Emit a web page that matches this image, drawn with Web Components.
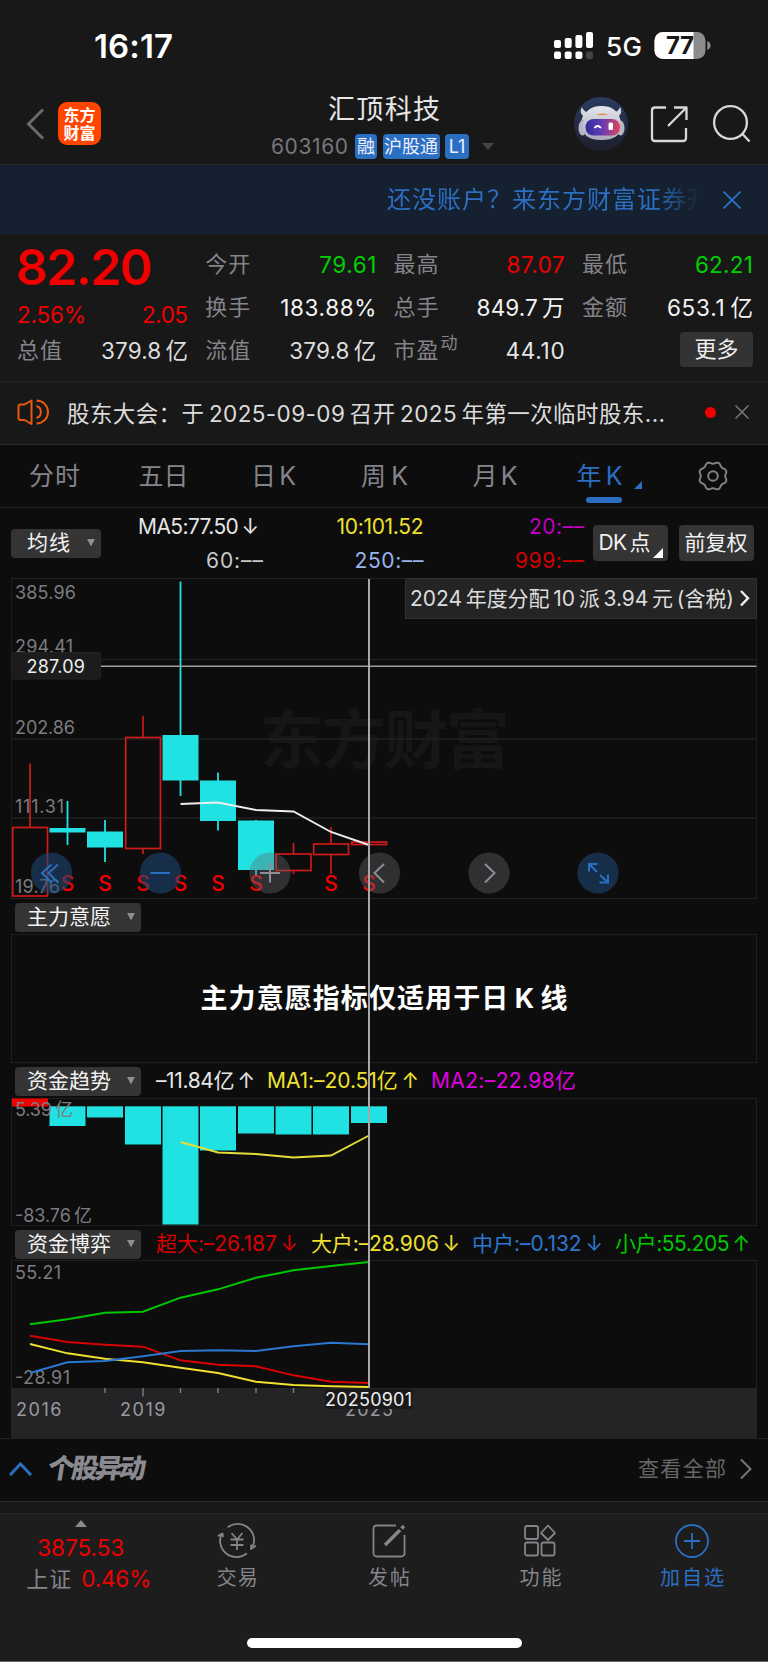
<!DOCTYPE html>
<html lang="zh-CN">
<head>
<meta charset="utf-8">
<title>汇顶科技 603160</title>
<style>
html, body { margin: 0; background: #0d0d0d; }
body {
  width: 768px;
  height: 1662px;
  overflow: hidden;
  font-family: Inter, "Noto Sans CJK SC", sans-serif;
  color: #e6e6e6;
  -webkit-font-smoothing: antialiased;
}
</style>
</head>
<body>
<stock-app></stock-app>
<script>
//shared base: every component only gives css and html
class BaseElement extends HTMLElement {
  connectedCallback() {
    if (this.shadowRoot) return;
    const root = this.attachShadow({ mode: "open" });
    root.innerHTML = `<style>:host{display:block;box-sizing:border-box} *{box-sizing:border-box} svg{display:block}${this.css()}</style>${this.html()}`;
    this.logic();
  }
  css() { return ""; }
  html() { return "<slot></slot>"; }
  logic() {}
}

//text spread over a given width: <fit-text w="45">
class FitText extends BaseElement {
  css() { return `:host{display:inline-block;white-space:nowrap;flex:none} span{display:inline-block}`; }
  html() { return `<span><slot></slot></span>`; }
  logic() {
    const w = Number(this.getAttribute("w"));
    const span = this.shadowRoot.querySelector("span");
    const n = [...this.textContent].length;
    if (!w || n < 2) return;
    const gap = (w - span.getBoundingClientRect().width) / (n - 1);
    span.style.letterSpacing = `${gap}px`;
    span.style.marginRight = `${-gap}px`;
  }
}

//16:17, signal, battery
class StatusBar extends BaseElement {
  css() {
    return `
    :host{height:92px;background:#181818;color:#fff;display:flex;align-items:center;padding-left:94px}
    .time{font-size:33px;font-weight:600;line-height:40px}
    .signal{margin-left:380px}
    .net{font-size:26px;font-weight:500;margin-left:13px;line-height:30px;padding-top:1px}
    .battery{margin-left:12px}`;
  }
  html() {
    return `
    <fit-text class="time" w="79">16:17</fit-text>
    <svg class="signal" width="40" height="28" viewBox="552 32 40 28" fill="#fff">
      <rect x="553" y="40" width="7" height="8" rx="2"/><rect x="563.7" y="38" width="7" height="10" rx="2"/>
      <rect x="574.4" y="35" width="7" height="13" rx="2"/><rect x="585" y="32" width="7" height="16" rx="2"/>
      <rect x="553" y="51.5" width="7" height="7.5" rx="2"/><rect x="563.7" y="51.5" width="7" height="7.5" rx="2"/>
      <rect x="574.4" y="51.5" width="7" height="7.5" rx="2"/><rect x="585" y="51.5" width="7" height="7.5" rx="2" fill="#444"/>
    </svg>
    <fit-text class="net" w="36">5G</fit-text>
    <svg class="battery" width="58" height="28" viewBox="653 32 58 28">
      <clipPath id="b"><rect x="653.5" y="32" width="51" height="27" rx="8.5"/></clipPath>
      <g clip-path="url(#b)"><rect x="653" y="32" width="52" height="28" fill="#8c8c8c"/><rect x="653" y="32" width="39.5" height="28" fill="#fff"/></g>
      <path d="M706.3 41q3.2 1.2 3.2 4.5t-3.2 4.5z" fill="#8c8c8c"/>
      <text x="665" y="54" font-size="24" font-weight="700" fill="#181818" textLength="28">77</text>
    </svg>`;
  }
}

//back, logo, stock name, actions
class StockHeader extends BaseElement {
  css() {
    return `
    :host{height:73px;background:#181818;border-bottom:1px solid #2b2b2b;display:grid;grid-template-columns:271px 1fr 207px}
    .left{display:flex;padding:10px 0 0 26px;gap:12px}
    .logo{width:43px;height:43px;border-radius:9px;background:#ff4500;color:#fff;font-size:16px;line-height:18px;font-weight:700;text-align:center;padding-top:4px}
    .name{font-size:27px;line-height:36px;margin-left:57px}
    .sub{display:flex;align-items:center;height:25px;margin-top:6px;color:#77777c;font-size:21px}
    .sub b{font-weight:400;background:#2b6fc2;color:#eef;border-radius:4px;height:25px;line-height:25px;font-size:18px;text-align:center;margin-right:5.5px}
    .right{display:flex;padding-top:3px}`;
  }
  html() {
    return `
    <div class="left">
      <svg width="20" height="44" viewBox="26 102 20 44" fill="none" stroke="#6a6a6a" stroke-width="3"><path d="M43 109.5L28.500 124L43 138.500"/></svg>
      <div class="logo">东方<br>财富</div>
    </div>
    <div>
      <fit-text class="name" w="112">汇顶科技</fit-text>
      <div class="sub"><fit-text w="77" style="margin-right:7px">603160</fit-text>
        <b style="width:22px">融</b><b style="width:57px">沪股通</b><b style="width:24px">L1</b>
        <svg width="12" height="8" style="margin-left:7px"><path d="M0 0h12l-6 7z" fill="#444"/></svg>
      </div>
    </div>
    <div class="right">
      <svg width="207" height="60" viewBox="561 95 207 60" fill="none" stroke="#d8d8d8" stroke-width="2.3" stroke-linejoin="round">
        <defs>
          <linearGradient id="bg" x2="0" y2="1"><stop stop-color="#2b3a60"/><stop offset="1" stop-color="#1c202a"/></linearGradient>
          <linearGradient id="visor"><stop stop-color="#2d2c9c"/><stop offset=".5" stop-color="#6b3bb4"/><stop offset="1" stop-color="#e04458"/></linearGradient>
          <linearGradient id="head" x2="0" y2="1"><stop stop-color="#e6e6ee"/><stop offset="1" stop-color="#a9a9b8"/></linearGradient>
        </defs>
        <circle cx="601" cy="124" r="27" fill="url(#bg)" stroke="none"/>
        <g stroke="none">
          <path d="M582 107q-3 5 1 9l-3 8 10-12q-6 1-8-5zM620 107q3 5-1 9l3 8-10-12q6 1 8-5z" fill="#d5d5de"/>
          <ellipse cx="582.500" cy="128" rx="4" ry="7.500" fill="#b7b7c4"/><ellipse cx="620.500" cy="128" rx="4" ry="7.500" fill="#b7b7c4"/>
          <path d="M583 123q1-17 18.500-17t18.500 17q3 17-18.500 17t-18.500-17z" fill="url(#head)"/>
          <rect x="585.500" y="119" width="34.500" height="16.500" rx="8" fill="url(#visor)"/>
          <path d="M596 115q6-3 13 0z" fill="#e08a3c"/>
          <rect x="608.500" y="122.500" width="4.500" height="7.500" rx="1.500" fill="#fff"/>
        </g>
        <path d="M594.500 128q3-4 6.500 0" stroke="#fff" stroke-width="1.800"/>
        <path d="M666 107.500H655q-3 0-3 3V138q0 3 3 3H683q3 0 3-3V128M674 107.500H686.500V120M686 108L668 126"/>
        <circle cx="730.500" cy="122.500" r="16.400"/><path d="M742.500 134L749.500 141.500"/>
      </svg>
    </div>`;
  }
}

//open account strip
class AccountBanner extends BaseElement {
  css() {
    return `
    :host{height:70px;background:#152130;color:#2b6fc2;display:flex;align-items:center;padding-left:387px;border-bottom:1px solid #1b1b1f}
    div{width:316px;overflow:hidden;font-size:24px;line-height:34px;-webkit-mask:linear-gradient(90deg,#000 268px,transparent 314px)}
    svg{margin-left:19px}`;
  }
  html() {
    return `<div><fit-text w="324">还没账户？来东方财富证券开</fit-text></div>
    <svg width="20" height="18" stroke="#2b6fc2" stroke-width="1.8"><path d="M1.500 .5L18.500 17.500M18.500 .5L1.500 17.500"/></svg>`;
  }
}

const RED = "#f00000", GREEN = "#00d000";
//label, label width, value, value width, colour
const quotes = [
  [["今开", 45, "79.61", 57, GREEN], ["最高", 45, "87.07", 58, RED], ["最低", 45, "62.21", 58, GREEN]],
  [["换手", 45, "183.88%", 96, "#f4f4f4"], ["总手", 45, "849.7&thinsp;万", 88, "#f4f4f4"], ["金额", 45, "653.1&thinsp;亿", 86, "#f4f4f4"]],
];

//price table
class QuoteBoard extends BaseElement {
  css() {
    return `
    :host{height:147px;background:#181818;border-bottom:1px solid #242424;padding:8px 15px 0 17px;display:grid;
      grid-template-columns:repeat(4,171px);column-gap:17.3px;grid-template-rows:43px 43px 43px;font-size:22.5px;line-height:43px}
    .cell{display:flex;justify-content:space-between}
    .cell>:first-child:not(button){color:#84848a;font-size:22px}
    .price{color:${RED};font-size:50px;font-weight:600;line-height:49px;margin-left:-1px}
    .chg{color:${RED};padding-top:7px}
    .cell.chg>:first-child:not(button){color:${RED};font-size:22.5px}
    sup{font-size:17px;line-height:28px;vertical-align:top;margin-left:2px}
    button{all:unset;width:73px;height:35px;line-height:35px;background:#333;border-radius:4px;text-align:center;color:#eee;margin:3px 0 0 auto;font-size:22px}`;
  }
  cell([label, lw, value, vw, color = "#dedede"]) {
    return `<div class="cell"><fit-text w="${lw}">${label}</fit-text><fit-text w="${vw}" style="color:${color}">${value}</fit-text></div>`;
  }
  html() {
    return `
    <fit-text class="price" w="137">82.20</fit-text>${quotes[0].map(this.cell).join("")}
    <div class="cell chg"><fit-text w="69">2.56%</fit-text><fit-text w="46">2.05</fit-text></div>${quotes[1].map(this.cell).join("")}
    ${this.cell(["总值", 45, "379.8&thinsp;亿", 87])}${this.cell(["流值", 45, "379.8&thinsp;亿", 87])}
    <div class="cell"><span><fit-text w="45">市盈</fit-text><sup>动</sup></span><fit-text w="59">44.10</fit-text></div>
    <div class="cell"><button><fit-text w="44">更多</fit-text></button></div>`;
  }
}

//news line
class NoticeBar extends BaseElement {
  css() {
    return `:host{height:63px;background:#181818;border-bottom:1px solid #2b2b2b;display:flex;align-items:center;color:#dcdcdc;font-size:22.5px;padding-bottom:2px}
    .ico{margin-left:17px} fit-text{margin-left:18px}
    i{width:11px;height:11px;border-radius:50%;background:#f00000;margin:0 19px 0 40px}`;
  }
  html() {
    return `
    <svg class="ico" width="32" height="26" viewBox="17 399 32 26" fill="none" stroke="#e8590c" stroke-width="2" stroke-linejoin="round">
      <path d="M31.500 400.500V424L24.500 420H20.500Q18.500 420 18.500 418V406.500Q18.500 404.500 20.500 404.500H24.500Z"/>
      <path d="M36.500 400.500A11.300 11.300 0 0 1 36.500 423.500M36.500 406A6.300 6.300 0 0 1 36.500 418"/>
    </svg>
    <fit-text w="598">股东大会：于&thinsp;2025-09-09&thinsp;召开&thinsp;2025&thinsp;年第一次临时股东...</fit-text>
    <i></i><svg width="14" height="14" stroke="#777" stroke-width="1.500"><path d="M.5 .5L13.500 13.500M13.500 .5L.5 13.500"/></svg>`;
  }
}

//period tabs
class PeriodTabs extends BaseElement {
  css() {
    return `
    :host{height:63px;border-bottom:1px solid #232323;display:grid;grid-template-columns:109px 109px 111px 111px 110px 99px 119px;
      color:#84848a;font-size:25px;line-height:62px;text-align:center;background:#0d0d0d}
    .on{color:#2b6fc2;position:relative}
    .on::after{content:"";position:absolute;left:36px;top:52px;width:36px;height:6px;border-radius:3px;background:#2b6fc2}
    .on svg{position:absolute;left:84px;top:36px}
    .gear{padding:15px 0 0 48px}`;
  }
  //eight soft lobes, none of them on the axes
  gear() {
    let d = "";
    for (let a = 0; a < 360; a += 5) {
      const t = a * Math.PI / 180;
      const r = 13.2 - Math.cos(8 * t);
      d += `${a ? "L" : "M"}${(16 + r * Math.cos(t)).toFixed(2)} ${(16 + r * Math.sin(t)).toFixed(2)}`;
    }
    return d + "Z";
  }
  html() {
    return `
    <div><fit-text w="51">分时</fit-text></div><div><fit-text w="50">五日</fit-text></div>
    <div><fit-text w="45">日 K</fit-text></div><div><fit-text w="47">周 K</fit-text></div><div><fit-text w="45">月 K</fit-text></div>
    <div class="on"><fit-text w="46">年 K</fit-text><svg width="8" height="8"><path d="M8 0V8H0z" fill="#2b6fc2"/></svg></div>
    <div class="gear"><svg width="32" height="32" fill="none" stroke="#84848a" stroke-width="1.9" stroke-linejoin="round"><path d="${this.gear()}"/><circle cx="16" cy="16" r="4.800"/></svg></div>`;
  }
}

//grey dropdown with a small triangle
class DropButton extends BaseElement {
  css() {
    return `:host{display:flex;flex:none;align-items:center;justify-content:space-between;height:29px;line-height:28px;background:#343434;border-radius:4px;color:#f2f2f2;
      font-size:21px;padding:0 6px 1px 12px}`;
  }
  html() { return `<slot></slot><svg width="8" height="8"><path d="M0 0h8l-4 7.500z" fill="#8e8e93"/></svg>`; }
}

//MA legend and two buttons
class MaRow extends BaseElement {
  css() {
    return `:host{height:70px;display:flex;font-size:21px;padding-left:11px}
    drop-button{width:90px;margin-top:21px;padding-left:16px}
    .ma{display:grid;grid-template-columns:repeat(3,160.500px);grid-template-rows:34px 34px;line-height:34px;justify-items:end;width:483px;padding-left:1.500px;margin-top:2px}
    .btn{background:#343434;border-radius:4px;height:36px;line-height:36px;margin-top:17px;width:75px;color:#f2f2f2;padding-left:6px;flex:none;position:relative}
    .btn svg{position:absolute;right:5px;bottom:3px}`;
  }
  html() {
    return `
    <drop-button><fit-text w="43">均线</fit-text></drop-button>
    <div class="ma">
      <fit-text w="121" style="margin-right:4px">MA5:77.50&thinsp;↓</fit-text><fit-text w="87" style="color:#f0e030">10:101.52</fit-text><fit-text w="55" style="color:#c000c0">20:––</fit-text>
      <fit-text w="57" style="color:#c8c8c8">60:––</fit-text><fit-text w="69" style="color:#9ab4ea">250:––</fit-text><fit-text w="69" style="color:#d00000">999:––</fit-text>
    </div>
    <div class="btn" style="margin-left:8.500px"><fit-text w="52">DK&thinsp;点</fit-text><svg width="10" height="10"><path d="M10 0V10H0z" fill="#fff"/></svg></div>
    <div class="btn" style="margin-left:11px"><fit-text w="63">前复权</fit-text></div>`;
  }
}

//x centre of each year 2016..2025
const xs = [30, 67.5, 105, 143, 180.5, 218, 256, 293.5, 331, 369];
const CYAN = "#20e2e2", CANDLE_RED = "#cf1a1a";
const line = (ys, color, from = 0) =>
  `<polyline points="${ys.map((y, i) => `${xs[i + from]},${y}`).join(" ")}" fill="none" stroke="${color}" stroke-width="1.900"/>`;
const label = (x, y, w, text, color = "#7c7c80") => `<text x="${x}" y="${y}" font-size="18" fill="${color}" textLength="${w}">${text}</text>`;

//up flag, body top, body bottom, high, low
const candles = [
  [1, 827.5, 896, 763.5, 896], [0, 828, 832.5, 801, 845], [0, 831.5, 847.5, 820, 862], [1, 737.5, 848.5, 716, 854],
  [0, 735, 780.5, 581.5, 796], [0, 780.5, 821, 772.5, 830.5], [0, 820.5, 870, 820, 875], [1, 854, 870.5, 843, 874],
  [1, 844, 854.5, 827, 874], [1, 842, 844.5, 838, 860],
];

//candle chart, 578..899
class KlineChart extends BaseElement {
  css() { return `:host{height:321px;overflow:hidden}`; }
  candle([up, top, bottom, high, low], i) {
    const x = xs[i];
    if (!up) return `<path d="M${x} ${high}V${low}" stroke="${CYAN}" stroke-width="1.800"/><rect x="${x - 18}" y="${top}" width="36" height="${bottom - top}" fill="${CYAN}"/>`;
    return `<g fill="none" stroke="${CANDLE_RED}" stroke-width="1.700"><path d="M${x} ${high}V${top}M${x} ${bottom}V${low}"/><rect x="${x - 17.3}" y="${top}" width="34.800" height="${bottom - top}"/></g>`;
  }
  html() {
    const round = (cx, blue, icon) => `<circle cx="${cx}" cy="873" r="20.600" fill="${blue ? "#1f4a7a" : "#6a6a70"}" fill-opacity="${blue ? .55 : .38}"/><path d="${icon}" stroke="${blue ? "#2b6fc2" : "#8e8e93"}"/>`;
    return `
    <svg width="768" height="321" viewBox="0 578 768 321">
      <text x="260" y="763" font-size="64" font-weight="700" fill="#161616" textLength="250">东方财富</text>
      <g stroke="#222" fill="none"><rect x="11.500" y="578.500" width="745" height="320.500" stroke="#1d1d1d"/>
        <path d="M11 659.500H757M11 739H757M11 818H757" stroke="#202020" stroke-width="1.500"/><path d="M11 578.500H757M11 898.500H757"/></g>
      ${candles.map((c, i) => this.candle(c, i)).join("")}
      ${line([804, 802.5, 810, 811.5, 832, 845], "#ededed", 4)}
      ${label(15, 598.7, 61, "385.96")}${label(15, 653, 58, "294.41")}${label(15, 733.7, 60, "202.86")}${label(15, 813.3, 49, "111.31")}${label(15, 893, 45, "19.76")}
      <path d="M101 666.300H756.500" stroke="#a0a0a0" stroke-width="1.500"/>
      <rect x="11.500" y="652.500" width="89" height="26.500" rx="2" fill="#1c1c1c" stroke="#222"/>${label(26.5, 673, 58.5, "287.09", "#eee")}
      <g font-size="21" font-weight="500" fill="#f00000" text-anchor="middle">${[1, 2, 3, 4, 5, 6, 8, 9].map(i => `<text x="${xs[i]}" y="891">S</text>`).join("")}</g>
      <g fill="none" stroke-width="2">
        ${round(51.5, 1, "M51.500 864.500L42 873L51.500 882.500M58 864.500L48.500 873L58 882.500")}
        ${round(160.5, 1, "M150.500 873H170")}
        ${round(270, 0, "M260 873H280M270 863.500V882.500")}
        ${round(379.5, 0, "M384 864L374.500 873L384 882.500")}
        ${round(489, 0, "M485 864L494.500 873L485 882.500")}
        ${round(598, 1, "M597 872L589 864M589 871.500V864H597.500M600 875L608 882.500M608 874.500V882.500H599.500")}
      </g>
      <rect x="405.500" y="578.500" width="351" height="40" fill="#242425" stroke="#303030"/>
      <text x="410" y="606.300" font-size="21" fill="#dcdcdc" textLength="324">2024&#8201;年度分配&#8201;10&#8201;派&#8201;3.94&#8201;元&#8201;(含税)</text>
      <path d="M741 591L748 598.200L741 605.500" fill="none" stroke="#eee" stroke-width="2.400"/>
    </svg>`;
  }
}

//row between panels: dropdown + slotted legend
class IndicatorRow extends BaseElement {
  css() {
    return `:host{display:flex;align-items:flex-start;padding:4px 0 0 15px;height:36px;font-size:21px;line-height:28px}
    drop-button{width:126px;margin-right:15px}`;
  }
  html() { return `<drop-button><fit-text w="84">${this.getAttribute("name")}</fit-text></drop-button><slot></slot>`; }
}

//empty panel with a message
class EmptyPanel extends BaseElement {
  css() {
    return `:host{height:129px;margin:0 11px;border:1px solid #1f1f1f;display:flex;align-items:center;justify-content:center;
      color:#fff;font-size:27px;font-weight:700;line-height:40px}`;
  }
}

//fund trend bars, 1098..1226
class FundTrend extends BaseElement {
  css() { return `:host{height:128px}`; }
  html() {
    const bottoms = [0, 1126, 1117.5, 1144.5, 1224.5, 1150.5, 1133.5, 1134.5, 1134.5, 1123];
    return `
    <svg width="768" height="128" viewBox="0 1098 768 128">
      <rect x="11.500" y="1098.500" width="745" height="127" fill="none" stroke="#1f1f1f"/>
      <rect x="12" y="1098.500" width="36" height="8" fill="#f00000"/>
      ${bottoms.map((b, i) => b ? `<rect x="${xs[i] - 18}" y="1106.300" width="36" height="${b - 1106.3}" fill="${CYAN}"/>` : "").join("")}
      ${line([1142, 1152.5, 1154, 1157.5, 1155.5, 1135.5], "#e6dc3c", 4)}
      ${label(15, 1115.7, 58, "5.39&#8201;亿")}${label(15, 1221.6, 77, "-83.76&#8201;亿")}
    </svg>`;
  }
}

//fund game lines, 1260..1388 and the time axis under it
class FundGame extends BaseElement {
  css() { return `:host{height:179px;border-bottom:1px solid #232323}`; }
  html() {
    return `
    <svg width="768" height="178" viewBox="0 1260 768 178">
      <rect x="11.500" y="1260.500" width="745" height="128" fill="none" stroke="#1f1f1f"/>
      <rect x="11" y="1388" width="746" height="50" fill="#242426"/>
      ${label(15, 1278.7, 46, "55.21")}${label(15, 1384, 55, "-28.91")}
      ${line([1324.3, 1319.3, 1312.7, 1311.7, 1297.7, 1289.3, 1277.7, 1270.3, 1266, 1262], "#00c800")}
      ${line([1335.7, 1342, 1344.7, 1346.7, 1360.3, 1364.7, 1366.3, 1375.3, 1381.7, 1383], "#d80000")}
      ${line([1344, 1353.3, 1358.7, 1362.3, 1367.7, 1373, 1381.7, 1385, 1386.3, 1387], "#f0e030")}
      ${line([1373, 1362.3, 1361, 1356.3, 1351, 1350.3, 1351, 1346.3, 1342.7, 1344.3], "#2b78d0")}
      <path d="M105 1388V1393M180.500 1388V1393M218 1388V1393M256 1388V1393M293.500 1388V1393M143 1388V1396.500" stroke="#77777c" stroke-width="1.500"/>
      ${label(16, 1416, 45.5, "2016", "#9a9a9e")}${label(120, 1416, 45.5, "2019", "#9a9a9e")}${label(345, 1416, 48, "2025", "#9a9a9e")}
      <rect x="325" y="1389" width="87.500" height="20" fill="#1a1a1a"/>${label(325, 1405.7, 87, "20250901", "#eee")}
    </svg>`;
  }
}

//all the charts with the vertical cross line on top
class ChartStage extends BaseElement {
  css() { return `:host{position:relative;background:#0d0d0d} i{position:absolute;left:368px;top:1px;width:2px;height:809px;background:#a8a8a8}`; }
  html() {
    return `
    <kline-chart></kline-chart>
    <indicator-row name="主力意愿" style="height:35px"></indicator-row>
    <empty-panel><fit-text w="367">主力意愿指标仅适用于日&thinsp;K&thinsp;线</fit-text></empty-panel>
    <indicator-row name="资金趋势" style="height:35px">
      <fit-text w="99">–11.84亿&thinsp;↑</fit-text><fit-text w="152" style="color:#f0e030;margin-left:12px">MA1:–20.51亿&thinsp;↑</fit-text><fit-text w="145" style="color:#e000e0;margin-left:12px">MA2:–22.98亿</fit-text>
    </indicator-row>
    <fund-trend></fund-trend>
    <indicator-row name="资金博弈" style="height:34px">
      <fit-text w="142" style="color:#d80000">超大:–26.187&thinsp;↓</fit-text><fit-text w="149" style="color:#f0e030;margin-left:13px">大户:–28.906&thinsp;↓</fit-text><fit-text w="131" style="color:#2b78d0;margin-left:12px">中户:–0.132&thinsp;↓</fit-text><fit-text w="135" style="color:#00c800;margin-left:12px">小户:55.205&thinsp;↑</fit-text>
    </indicator-row>
    <fund-game></fund-game><i></i>`;
  }
}

//stock moves header
class MovesRow extends BaseElement {
  css() {
    return `:host{height:63px;background:#0d0d0d;border-bottom:1px solid #2b2b2b;display:flex;align-items:center;padding:0 16px 2px 9px}
    .t{font-size:27px;font-weight:900;line-height:36px;transform:skewX(-9deg);color:#8a8a90;margin:0 auto 0 16px}
    .all{font-size:21px;line-height:30px;color:#66666a;margin-right:14px}`;
  }
  html() {
    return `<svg width="23" height="14" fill="none" stroke="#2b6fc2" stroke-width="3"><path d="M1 13L11.500 2L22 13"/></svg>
    <fit-text class="t" w="104">个股异动</fit-text><fit-text class="all" w="88">查看全部</fit-text>
    <svg width="12" height="22" fill="none" stroke="#77777c" stroke-width="2"><path d="M1 1.500L10.500 11L1 20.500"/></svg>`;
  }
}

//one entry of the bottom bar
class TabItem extends BaseElement {
  css() { return `:host{text-align:center;color:#84848a;font-size:20px;line-height:28px;padding-top:8px} svg{margin:0 auto 4px}`; }
  html() {
    return `<svg width="40" height="38" fill="none" stroke="currentColor" stroke-width="1.800" stroke-linejoin="round">${icons[this.getAttribute("icon")]}</svg><slot></slot>`;
  }
}
const icons = {
  trade: `<path d="M10.800 5.300A16.300 16.300 0 0 1 35.800 24.500M29.800 31.300A16.300 16.300 0 0 1 4.800 11.500M1 14L5.500 11.500L6 15M39 23.800L34 27L34.300 22.500M14.500 11L20 17.500L25.500 11M20 17.500V28M13.500 17.500H26.500M13.500 23H26.500"/>`,
  post: `<path d="M27 3.500H8Q4.500 3.500 4.500 7V31Q4.500 34.500 8 34.500H32Q35.500 34.500 35.500 31V13"/><path d="M16 23L31 8" stroke-width="3.500"/><path d="M32.500 6.500L35 4" stroke-width="3.500"/>`,
  func: `<rect x="5" y="4" width="13" height="13" rx="2"/><rect x="5" y="20.500" width="13" height="13" rx="2"/><rect x="21.500" y="20.500" width="13" height="13" rx="2"/><path d="M28 3.500L35 11L28 18L21 11Z"/>`,
  add: `<circle cx="20" cy="19" r="16"/><path d="M20 11V27M12 19H28"/>`,
};

class BottomBar extends BaseElement {
  css() {
    return `:host{height:149px;background:#1d1d1d;border-top:1px solid #262626;border-bottom:1px solid #666;display:grid;
      grid-template-columns:161.500px repeat(4,151.600px);position:relative}
    .idx{text-align:center;color:${RED};font-size:22.500px;line-height:31px;padding-top:6px}
    .idx svg{margin:0 auto 5px} .idx div{padding-left:16px}
    .sh{color:#84848a;font-size:22px;margin-right:10px}
    .home{position:absolute;left:247px;top:124px;width:275px;height:10px;border-radius:5px;background:#fff}`;
  }
  html() {
    return `
    <div class="idx"><svg width="12" height="7"><path d="M6 0L12 7H0z" fill="#8a8a90"/></svg>
      <fit-text w="87">3875.53</fit-text><div><fit-text class="sh" w="45">上证</fit-text><fit-text w="70">0.46%</fit-text></div></div>
    <tab-item icon="trade"><fit-text w="41">交易</fit-text></tab-item>
    <tab-item icon="post"><fit-text w="42">发帖</fit-text></tab-item>
    <tab-item icon="func"><fit-text w="42">功能</fit-text></tab-item>
    <tab-item icon="add" style="color:#2b6fc2"><fit-text w="64">加自选</fit-text></tab-item>
    <div class="home"></div>`;
  }
}

class StockApp extends BaseElement {
  html() {
    return `
    <status-bar></status-bar><stock-header></stock-header><account-banner></account-banner>
    <quote-board></quote-board><notice-bar></notice-bar><period-tabs></period-tabs><ma-row></ma-row>
    <chart-stage></chart-stage>
    <moves-row></moves-row><div style="height:11px;background:#181818"></div>
    <bottom-bar></bottom-bar>`;
  }
}

//register, leaf elements first
customElements.define("fit-text", FitText);
customElements.define("drop-button", DropButton);
customElements.define("status-bar", StatusBar);
customElements.define("stock-header", StockHeader);
customElements.define("account-banner", AccountBanner);
customElements.define("quote-board", QuoteBoard);
customElements.define("notice-bar", NoticeBar);
customElements.define("period-tabs", PeriodTabs);
customElements.define("ma-row", MaRow);
customElements.define("kline-chart", KlineChart);
customElements.define("indicator-row", IndicatorRow);
customElements.define("empty-panel", EmptyPanel);
customElements.define("fund-trend", FundTrend);
customElements.define("fund-game", FundGame);
customElements.define("chart-stage", ChartStage);
customElements.define("moves-row", MovesRow);
customElements.define("tab-item", TabItem);
customElements.define("bottom-bar", BottomBar);
customElements.define("stock-app", StockApp);
</script>
</body>
</html>
